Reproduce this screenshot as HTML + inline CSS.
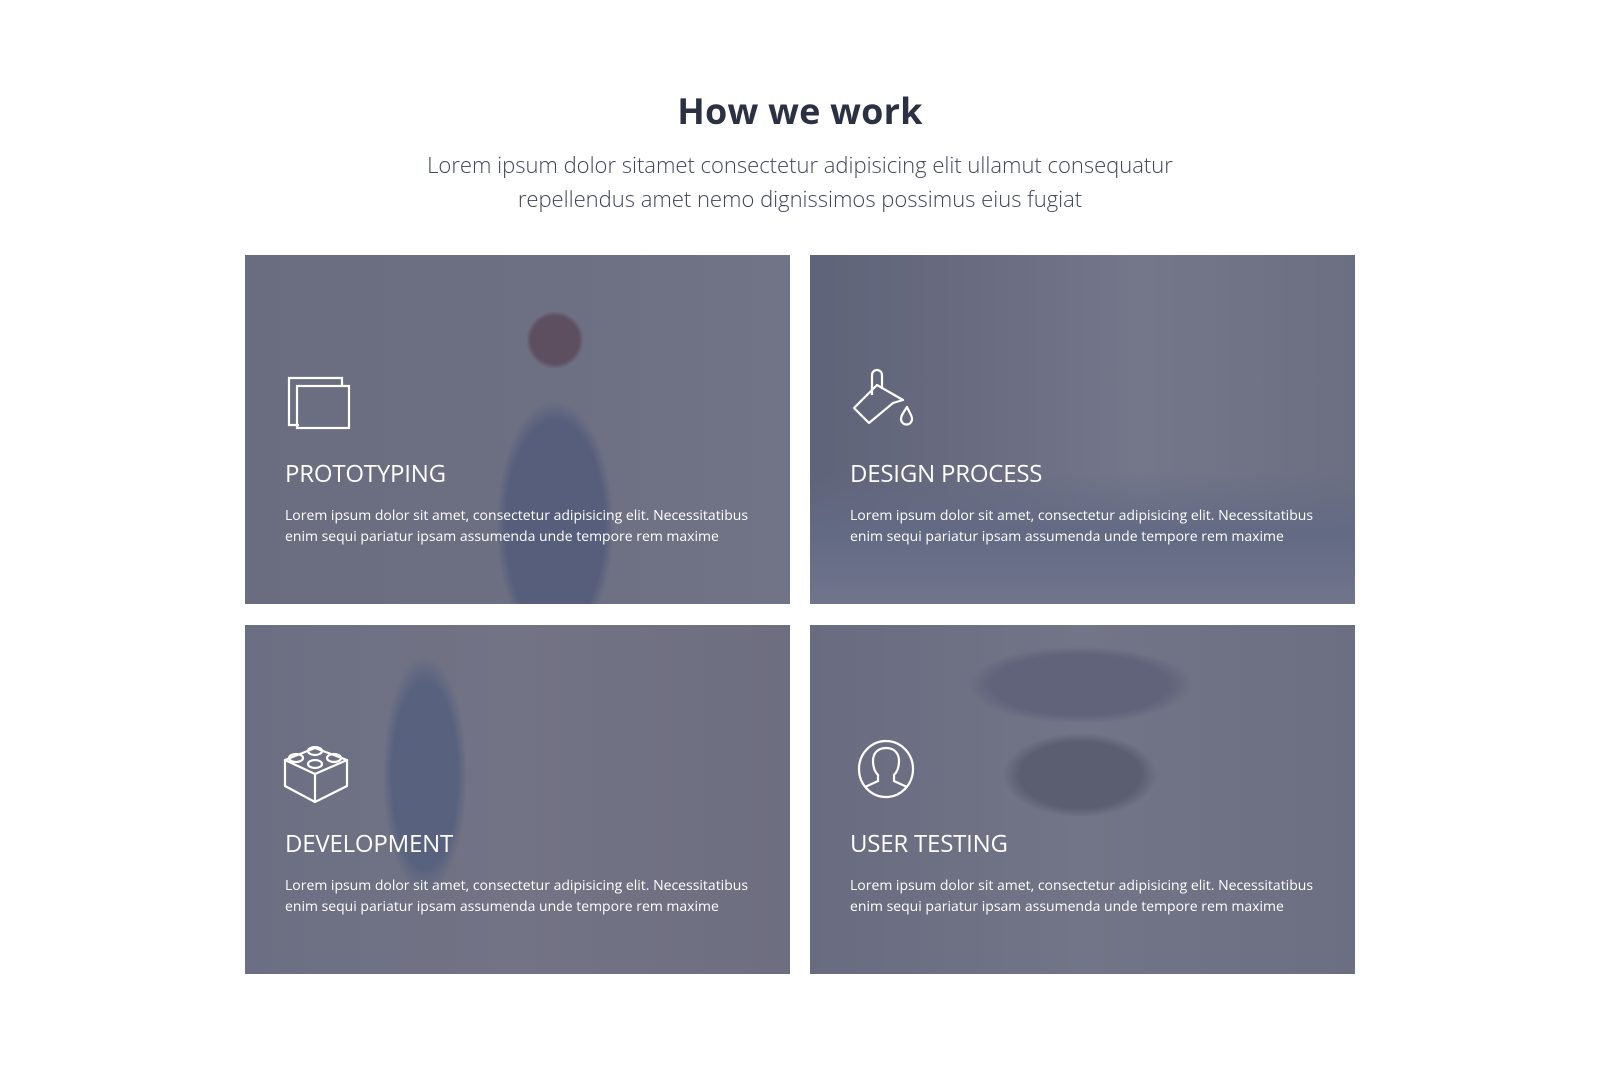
<!DOCTYPE html>
<html><head><style>
body{margin:0;background:#fff;font-family:"Open Sans","Liberation Sans",sans-serif;width:1600px;height:1080px;position:relative;overflow:hidden}
h1{position:absolute;top:86px;left:0;width:1600px;text-align:center;margin:0;font-size:36px;font-weight:bold;color:#2b3042;letter-spacing:0.2px}
.sub{position:absolute;top:149px;left:0;width:1600px;text-align:center;font-size:22px;line-height:33.5px;color:#40445a;font-weight:300}
.card{position:absolute;width:545px;height:349px;overflow:hidden;color:#fff}
.card svg.ic{position:absolute;left:40px;top:120px}
.card h3{position:absolute;left:40px;top:202px;margin:0;font-size:24px;font-weight:normal;letter-spacing:-0.2px}
.card p{position:absolute;left:40px;top:250px;margin:0;font-size:14px;line-height:21px;width:480px}
</style></head><body>
<h1>How we work</h1>
<div class="sub">Lorem ipsum dolor sitamet consectetur adipisicing elit ullamut consequatur<br>repellendus amet nemo dignissimos possimus eius fugiat</div>

<div class="card" style="left:245px;top:255px;background:radial-gradient(ellipse 90px 190px at 310px 270px,#565e7c 55%,transparent 65%),radial-gradient(circle 40px at 310px 85px,#5e4f60 60%,transparent 72%),linear-gradient(90deg,#6a6d80,#6d7083 60%,#717487)">
<svg class="ic" width="70" height="60" viewBox="0 0 70 60" fill="none" stroke="#fff" stroke-width="2.2"><path d="M14 50H4V3h53v8"/><rect x="12" y="11" width="52" height="42"/></svg>
<h3>PROTOTYPING</h3>
<p>Lorem ipsum dolor sit amet, consectetur adipisicing elit. Necessitatibus enim sequi pariatur ipsam assumenda unde tempore rem maxime</p></div>

<div class="card" style="left:810px;top:255px;background:linear-gradient(180deg,transparent 62%,#636a84 80%,#70758b),linear-gradient(90deg,#5f6379,#696c80 30%,#74768a 60%,#6c6f82)">
<svg class="ic" width="70" height="70" viewBox="0 0 70 70" fill="none" stroke="#fff" stroke-width="2.2" stroke-linejoin="round" style="top:112px"><path d="M22 28V8a5 5 0 0 1 10 0v14"/><path d="M27 18L4 41l15 15 24-20 10-3z"/><path d="M57 40c-3 5-6 8-6 12a5 5 0 0 0 11 0c0-4-3-7-5-12z"/></svg>
<h3>DESIGN PROCESS</h3>
<p>Lorem ipsum dolor sit amet, consectetur adipisicing elit. Necessitatibus enim sequi pariatur ipsam assumenda unde tempore rem maxime</p></div>

<div class="card" style="left:245px;top:625px;background:radial-gradient(ellipse 60px 170px at 180px 150px,#58627e 55%,transparent 70%),linear-gradient(90deg,#6c6f83,#727385 50%,#6d6e80)">
<svg class="ic" width="70" height="60" viewBox="0 0 70 60" fill="none" stroke="#fff" stroke-width="2.2" stroke-linejoin="round" style="top:118px;left:38px"><path d="M2 17l30-12 32 12-32 14z"/><path d="M2 17v26l30 16 32-16V17"/><path d="M32 31v28"/><ellipse cx="13" cy="15" rx="7" ry="4"/><ellipse cx="51" cy="15" rx="7" ry="4"/><ellipse cx="32" cy="8" rx="7" ry="4"/><ellipse cx="32" cy="21" rx="7" ry="4"/></svg>
<h3>DEVELOPMENT</h3>
<p>Lorem ipsum dolor sit amet, consectetur adipisicing elit. Necessitatibus enim sequi pariatur ipsam assumenda unde tempore rem maxime</p></div>

<div class="card" style="left:810px;top:625px;background:radial-gradient(ellipse 160px 55px at 270px 60px,#60637a 55%,transparent 70%),radial-gradient(ellipse 110px 60px at 270px 150px,#5a5e70 55%,transparent 70%),linear-gradient(90deg,#696c80,#727487 50%,#6c6f82)">
<svg class="ic" width="60" height="60" viewBox="0 0 60 60" fill="none" stroke="#fff" stroke-width="2.2" style="left:46px;top:114px"><ellipse cx="30" cy="30" rx="27" ry="28"/><path d="M9 48l13-6v-6c-4-4-5-9-5-14 0-8 5-13 13-13s13 5 13 13c0 5-1 10-5 14v6l13 6"/></svg>
<h3>USER TESTING</h3>
<p>Lorem ipsum dolor sit amet, consectetur adipisicing elit. Necessitatibus enim sequi pariatur ipsam assumenda unde tempore rem maxime</p></div>
</body></html>
